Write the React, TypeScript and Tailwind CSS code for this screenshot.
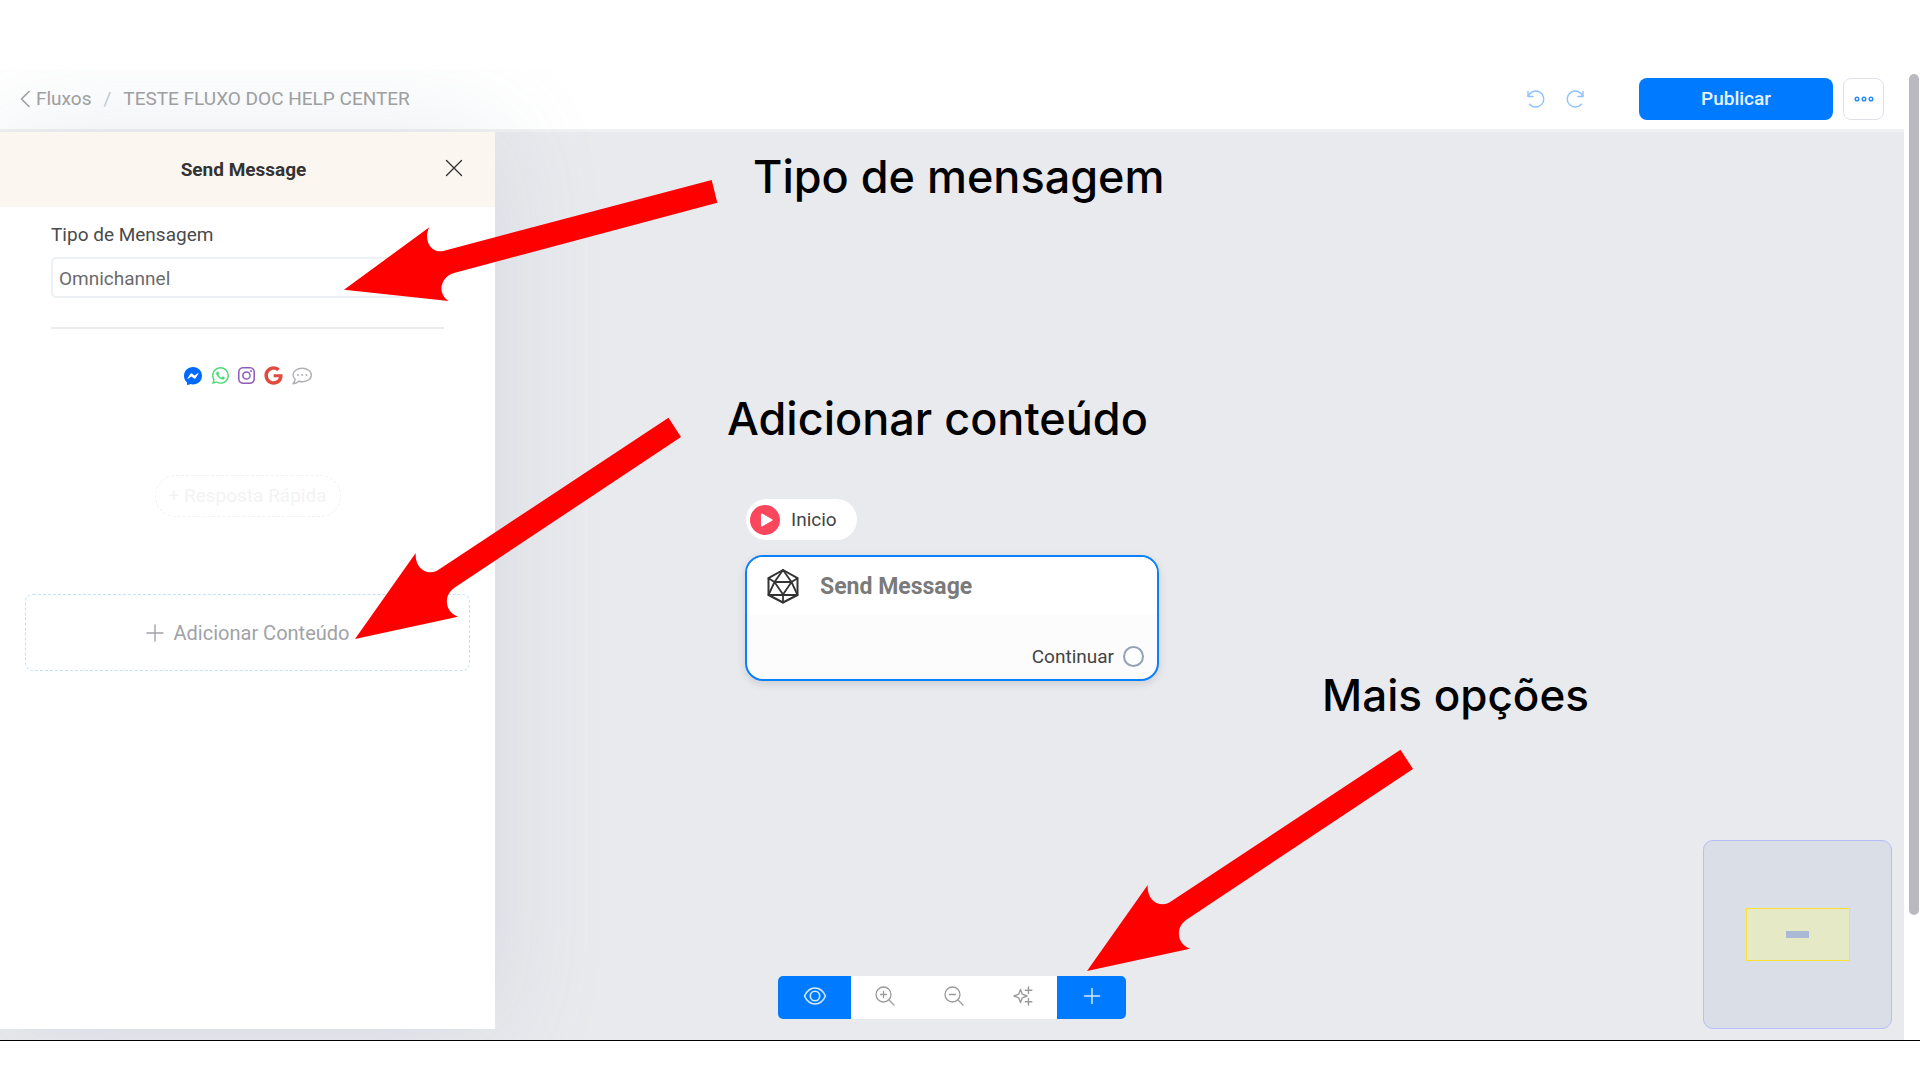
import React from "react";
import { BsWhatsapp, BsInstagram, BsMessenger } from "react-icons/bs";
import { FaGoogle } from "react-icons/fa";

type IconProps = { className?: string; children: React.ReactNode; w: number; h: number; stroke?: number };

function Icon({ className, children, w, h, stroke = 1 }: IconProps) {
  return (
    <svg
      aria-hidden="true"
      className={className}
      width={w}
      height={h}
      viewBox={`0 0 ${w} ${h}`}
      fill="none"
      stroke="currentColor"
      strokeWidth={stroke}
      strokeLinecap="round"
      strokeLinejoin="round"
    >
      {children}
    </svg>
  );
}

function Header() {
  return (
    <header className="flex h-[63px] items-center justify-between border-b-[3px] border-[#f0f1f3] bg-white pl-5 pr-5">
      <nav className="flex items-center text-[19px] leading-6 text-[#a0a0a0]" aria-label="Breadcrumb">
        <a href="#fluxos" className="flex items-center gap-[6px]">
          <Icon w={10} h={18} stroke={1.6}>
            <path d="M9 1.5 1.5 9 9 16.5" />
          </Icon>
          Fluxos
        </a>
        <span className="px-3 text-[#c9cbd6]">/</span>
        <a href="#teste">TESTE FLUXO DOC HELP CENTER</a>
      </nav>
      <div className="flex items-center">
        <button type="button" aria-label="Desfazer" className="text-[#8dc3fc]">
          <Icon w={18} h={18} stroke={1.4}>
            <path d="M1 1.5V6.5H6" />
            <path d="M1.2 6.2A8 8 0 1 1 2.6 14.2" />
          </Icon>
        </button>
        <button type="button" aria-label="Refazer" className="ml-[21px] text-[#8dc3fc]">
          <Icon w={18} h={18} stroke={1.4}>
            <path d="M17 1.5V6.5H12" />
            <path d="M16.8 6.2A8 8 0 1 0 15.4 14.2" />
          </Icon>
        </button>
        <button
          type="button"
          className="ml-[55px] h-[42px] w-[194px] rounded-lg bg-[#007bff] text-[19px] font-medium text-[#e6f2ff]"
        >
          Publicar
        </button>
        <button
          type="button"
          aria-label="Opções do fluxo"
          className="ml-[10px] flex h-[42px] w-[41px] items-center justify-center rounded-lg border border-[#dfe2ea] bg-white text-[#2b8cf5]"
        >
          <Icon w={20} h={6} stroke={1.5}>
            <circle cx="3" cy="3" r="1.8" />
            <circle cx="10" cy="3" r="1.8" />
            <circle cx="17" cy="3" r="1.8" />
          </Icon>
        </button>
      </div>
    </header>
  );
}

function SidePanel() {
  return (
    <aside className="relative mb-[11px] flex w-[495px] shrink-0 flex-col bg-white shadow-[0_0_100px_rgba(125,150,170,0.19)]">
      <div className="relative flex h-[75px] items-center justify-center bg-[#fbf6f0] pr-2">
        <h2 className="text-[19px] font-bold leading-6 text-[#333333]">Send Message</h2>
        <button type="button" aria-label="Fechar" className="absolute right-8 top-[27px] text-[#333333]">
          <Icon w={18} h={18} stroke={1.4}>
            <path d="M1.5 1.5 16.5 16.5M16.5 1.5 1.5 16.5" />
          </Icon>
        </button>
      </div>

      <div className="flex flex-col pl-[51px] pr-[51px] pt-4">
        <label htmlFor="tipo" className="text-[19px] leading-6 text-[#4a4a4a]">
          Tipo de Mensagem
        </label>
        <select
          id="tipo"
          className="mt-[10px] h-[41px] appearance-none rounded-[5px] border-2 border-[#edf1f6] bg-white px-[6px] pt-[3px] text-[19px] text-[#6b6b6b]"
        >
          <option>Omnichannel</option>
        </select>
        <hr className="mt-[29px] border-t-2 border-[#e9ebef]" />
      </div>

      <div className="mt-[37px] flex items-center justify-center gap-[9px]">
        <BsMessenger size={18} color="#006aff" />
        <BsWhatsapp size={17} color="#4bd975" className="ml-px" />
        <BsInstagram size={17} color="#8f5cba" />
        <FaGoogle size={19} color="#e04a3f" />
        <Icon w={20} h={18} stroke={1.4} className="text-[#adafb3]">
          <path d="M3.2 12.2C1.700 10.900 1 9.600 1 8 1 4.300 5 1.300 10.200 1.300S19.400 4.300 19.400 8s-4 6.700-9.200 6.700c-1.300 0-2.500-.2-3.600-.5C5.300 15.600 3.500 16.600 1 16.800 2.300 15.500 3 14 3.200 12.200Z" />
          <path d="M6 8h.01M10.200 8h.01M14.400 8h.01" strokeWidth={2} />
        </Icon>
      </div>

      <button
        type="button"
        className="mt-[90px] h-[42px] w-[186px] self-center rounded-full border border-dashed border-[#f1f1f1] text-[19px] text-[#f3f3f3]"
      >
        + Resposta Rápida
      </button>

      <button
        type="button"
        className="mx-[25px] mt-[77px] flex h-[77px] items-center justify-center gap-[10px] rounded-lg border border-dashed border-[#c5e0fb] text-[20px] text-[#a0a2a8]"
      >
        <Icon w={18} h={18} stroke={1.4}>
          <path d="M9 1V17M1 9H17" />
        </Icon>
        Adicionar Conteúdo
      </button>
    </aside>
  );
}

function FlowNodes() {
  return (
    <div className="absolute left-1/2 top-[367px] flex w-[414px] -translate-x-1/2 flex-col items-start">
      <div className="ml-px flex h-[41px] w-[111px] items-center gap-[11px] rounded-full bg-white pl-1 text-[19px] text-[#444444]">
        <svg width="30" height="30" viewBox="0 0 30 30" aria-hidden="true">
          <circle cx="15" cy="15" r="15" fill="#fb475e" />
          <path d="M12 9.500 21.500 15 12 20.500Z" fill="#fff" stroke="#fff" strokeWidth="2" strokeLinejoin="round" />
        </svg>
        <span className="pt-[2px]">Inicio</span>
      </div>
      <section className="mt-[15px] w-full overflow-hidden rounded-[18px] border-2 border-[#0b80fb] bg-[#fcfcfc] shadow-[0_3px_8px_rgba(0,0,0,0.12)]">
        <div className="flex h-[58px] items-center gap-[21px] bg-white pl-5">
          <Icon w={32} h={36} stroke={2} className="text-[#333333]">
            <path d="M16 2 30.500 10.200V27L16 34.500 1.500 27V10.200Z" />
            <path
              d="M16 2 7.500 14H24.500ZM7.500 14 16 26.500 24.500 14M1.500 10.200 7.500 14 1.500 27 30.500 27 24.500 14 30.500 10.200M16 26.500V34.500"
              strokeWidth={1.8}
            />
          </Icon>
          <h3 className="pt-[2px] text-[23px] font-bold leading-7 text-[#7a7a7a]">Send Message</h3>
        </div>
        <div className="flex h-16 items-end justify-end gap-[9px] pb-[10px] pr-[13px] text-[19px] leading-6 text-[#444444]">
          Continuar
          <span className="mb-[2px] size-[21px] rounded-full border-2 border-[#94a0b5] bg-white" />
        </div>
      </section>
    </div>
  );
}

function Toolbar() {
  return (
    <div className="absolute bottom-[21px] left-1/2 flex h-[43px] w-[348px] -translate-x-1/2 overflow-hidden rounded-[5px] bg-white text-[#9b9b9b]">
      <button type="button" aria-label="Visualizar" className="flex w-[73px] items-center justify-center bg-[#007bff] pb-1 text-[#d5eaff]">
        <Icon w={24} h={18} stroke={1.6}>
          <path d="M1.500 9C4 3.600 7.600 1 12 1s8 2.600 10.500 8C20 14.400 16.400 17 12 17S4 14.400 1.500 9Z" />
          <circle cx="12" cy="9" r="4.700" />
        </Icon>
      </button>
      <button type="button" aria-label="Aumentar zoom" className="flex flex-1 items-center justify-center pb-1">
        <Icon w={20} h={20} stroke={1.3}>
          <circle cx="8.500" cy="8.500" r="7.500" />
          <path d="M14 14 19 19M8.500 5.500V11.500M5.500 8.500H11.500" />
        </Icon>
      </button>
      <button type="button" aria-label="Diminuir zoom" className="flex flex-1 items-center justify-center pb-1">
        <Icon w={20} h={20} stroke={1.3}>
          <circle cx="8.500" cy="8.500" r="7.500" />
          <path d="M14 14 19 19M5.500 8.500H11.500" />
        </Icon>
      </button>
      <button type="button" aria-label="Organizar" className="flex flex-1 items-center justify-center pb-1">
        <Icon w={20} h={20} stroke={1.4}>
          <path d="M7.500 3.500 9.300 8.200 14 10 9.300 11.800 7.500 16.500 5.700 11.800 1 10 5.700 8.200Z" />
          <path d="M15.500 1V7.500M12.300 4.200H18.800M15.500 12.500V19M12.300 15.700H18.800" />
        </Icon>
      </button>
      <button type="button" aria-label="Mais opções" className="flex w-[69px] items-center justify-center bg-[#007bff] pb-1 text-[#d5eaff]">
        <Icon w={18} h={18} stroke={1.500}>
          <path d="M9 1.500V16.500M1.500 9H16.500" />
        </Icon>
      </button>
    </div>
  );
}

function MiniMap() {
  return (
    <div className="absolute bottom-[11px] right-3 flex size-[189px] items-center justify-center rounded-[10px] border border-[#b7bcfb] bg-[#dadfe7]">
      <div className="flex h-[53px] w-[104px] items-center justify-center border border-[#ffe135] bg-[#e6e9c5]">
        <div className="h-[7px] w-[23px] bg-[#abb9d5]" />
      </div>
    </div>
  );
}

function Annotations() {
  return (
    <div className="pointer-events-none absolute left-0 top-0 z-20 font-['Inter',sans-serif] font-medium leading-[48px] text-black">
      <svg className="absolute left-0 top-0" width="1904" height="1040" viewBox="0 0 1904 1040" fill="#ff0000" aria-hidden="true">
        <path d="M344 289.700 429.300 227.300C423 240 431 252 441 251.300Q443 251.300 447 250L711.700 180 717.300 202.700 454 273C440 277 437 294 448.700 301Z" />
        <g id="diagonal-arrow">
          <path d="M355 639 415.700 553C415 564 421 572 430.700 572.300 434 572.300 436.500 571.200 439.300 569.300L668.500 417.700 681 437 454 588C443 596 445 612 458 616.700Z" />
        </g>
        <use href="#diagonal-arrow" x="732" y="332" />
      </svg>
      <p className="absolute left-[753px] top-[153px] whitespace-nowrap text-[45px]">Tipo de mensagem</p>
      <p className="absolute left-[727px] top-[395px] whitespace-nowrap text-[45px]">Adicionar conteúdo</p>
      <p className="absolute left-[1322px] top-[671px] whitespace-nowrap text-[44px]">Mais opções</p>
    </div>
  );
}

export default function App() {
  return (
    <div className="relative flex min-h-screen flex-col bg-white pb-[39px] pt-[69px] font-['Roboto',sans-serif]">
      <div className="flex flex-1 border-b border-black">
        <div className="flex min-w-0 flex-1 flex-col overflow-hidden">
          <Header />
          <main className="relative flex flex-1 bg-[#e9eaee]">
            <SidePanel />
            <FlowNodes />
            <Toolbar />
            <MiniMap />
          </main>
        </div>
        <div className="w-4 shrink-0 pl-[5px] pt-[5px]">
          <div className="h-[841px] w-[10px] rounded-full bg-[#bab9c0]" />
        </div>
      </div>
      <Annotations />
    </div>
  );
}
